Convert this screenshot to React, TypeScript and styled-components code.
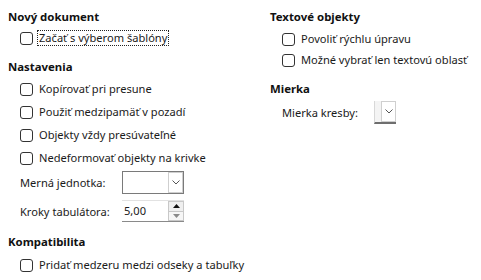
import React from 'react'
import styled, { createGlobalStyle } from 'styled-components'

const Global = createGlobalStyle`
  html, body { margin:0; padding:0; background:#fff; }
  body {
    font-family:"Noto Sans", "Open Sans", sans-serif;
    font-size:11.1px;
    color:#1a1a1a;
  }
`

const Page = styled.div`
  display:grid;
  grid-template-columns:262px 1fr;
  width:481px;
  height:280px;
  box-sizing:border-box;
  padding:9px 0 0 8px;
`

const Column = styled.div`
  display:flex;
  flex-direction:column;
`

const Section = styled.section<{ $top?: number }>`
  display:flex;
  flex-direction:column;
  margin-top:${p => p.$top ?? 0}px;
`

const Heading = styled.h3`
  margin:0;
  height:16px;
  font-size:11.4px;
  line-height:16px;
  font-weight:700;
  color:#111;
`

const Body = styled.div<{ $top?: number }>`
  display:flex;
  flex-direction:column;
  padding-left:12px;
  margin-top:${p => p.$top ?? 2}px;
`

const CheckRow = styled.label<{ $h?: number }>`
  display:flex;
  align-items:center;
  gap:5px;
  height:${p => p.$h ?? 22}px;
  white-space:nowrap;
`

const Box = styled.span`
  width:11px;
  height:11px;
  border:1px solid #333;
  border-radius:3px;
  background:#fff;
  flex:none;
`

const Caption = styled.span<{ $focus?: boolean }>`
  line-height:14px;
  padding:0 1px;
  margin-left:-1px;
  border:1px dotted ${p => (p.$focus ? '#222' : 'transparent')};
`

const FieldRow = styled.div<{ $h: number; $top?: number; $label: number }>`
  display:grid;
  grid-template-columns:${p => p.$label}px auto;
  align-items:center;
  height:${p => p.$h}px;
  margin-top:${p => p.$top ?? 0}px;
`

const Combo = styled.div<{ $w: number }>`
  display:flex;
  justify-content:flex-end;
  width:${p => p.$w}px;
  height:23px;
  box-sizing:border-box;
  background:#fff;
  border:1px solid #7a7a7a;
`

const NarrowCombo = styled.div`
  display:flex;
  justify-content:flex-end;
  width:22px;
  height:23px;
  box-sizing:border-box;
  border-left:1px solid #d8d8d8;
  border-bottom:2px solid #6e6e6e;
  background:#f4f4f4;
`

const DropButton = styled.div`
  display:flex;
  align-items:center;
  justify-content:center;
  width:15px;
  box-sizing:border-box;
  border:1px solid #cfcfcf;
  background:#fff;
`

const Spin = styled.div`
  display:flex;
  width:62px;
  height:22px;
  box-sizing:border-box;
  border-top:1px solid #e2e2e2;
  border-bottom:1px solid #8a8a8a;
  background:#fff;
`

const SpinValue = styled.span`
  flex:1;
  padding-left:2px;
  line-height:20px;
`

const SpinButtons = styled.div`
  display:flex;
  flex-direction:column;
  width:16px;
`

const SpinButton = styled.div<{ $down?: boolean }>`
  flex:1;
  display:flex;
  align-items:center;
  justify-content:center;
  border:1px solid #c8c8c8;
  border-top-width:${p => (p.$down ? 0 : 1)}px;
  background:${p => (p.$down ? '#f6f6f6' : '#efefef')};
`

const Chevron = () => (
  <svg width="8" height="5" viewBox="0 0 8 5">
    <polyline points="0.5,0.5 4,4 7.5,0.5" fill="none" stroke="#555" strokeWidth="1" />
  </svg>
)

const Arrow = ({ down }: { down?: boolean }) => (
  <svg width="7" height="4" viewBox="0 0 7 4">
    {down ? <polygon points="0,0 7,0 3.5,4" fill="#8a8a8a" /> : <polygon points="0,4 7,4 3.5,0" fill="#111" />}
  </svg>
)

const Check = ({ children, focus, h }: { children: React.ReactNode; focus?: boolean; h?: number }) => (
  <CheckRow $h={h}>
    <Box />
    <Caption $focus={focus}>{children}</Caption>
  </CheckRow>
)

export default function App() {
  return (
    <>
      <Global />
      <Page>
        <Column>
          <Section>
            <Heading>Nový dokument</Heading>
            <Body $top={2}>
              <Check focus>Začať s výberom šablóny</Check>
            </Body>
          </Section>

          <Section $top={10}>
            <Heading>Nastavenia</Heading>
            <Body $top={2.5}>
              <Check h={23}>Kopírovať pri presune</Check>
              <Check h={23}>Použiť medzipamäť v pozadí</Check>
              <Check h={23}>Objekty vždy presúvateľné</Check>
              <Check h={23}>Nedeformovať objekty na krivke</Check>
              <FieldRow $h={24} $top={0.5} $label={102}>
                <span>Merná jednotka:</span>
                <Combo $w={62}>
                  <DropButton>
                    <Chevron />
                  </DropButton>
                </Combo>
              </FieldRow>
              <FieldRow $h={23} $top={5.5} $label={102}>
                <span>Kroky tabulátora:</span>
                <Spin>
                  <SpinValue>5,00</SpinValue>
                  <SpinButtons>
                    <SpinButton>
                      <Arrow />
                    </SpinButton>
                    <SpinButton $down>
                      <Arrow down />
                    </SpinButton>
                  </SpinButtons>
                </Spin>
              </FieldRow>
            </Body>
          </Section>

          <Section $top={11.5}>
            <Heading>Kompatibilita</Heading>
            <Body $top={4}>
              <Check>Pridať medzeru medzi odseky a tabuľky</Check>
            </Body>
          </Section>
        </Column>

        <Column>
          <Section>
            <Heading>Textové objekty</Heading>
            <Body $top={3.5}>
              <Check h={21}>Povoliť rýchlu úpravu</Check>
              <Check h={21}>Možné vybrať len textovú oblasť</Check>
            </Body>
          </Section>

          <Section $top={10}>
            <Heading>Mierka</Heading>
            <Body $top={4.5}>
              <FieldRow $h={23} $label={92}>
                <span>Mierka kresby:</span>
                <NarrowCombo>
                  <DropButton>
                    <Chevron />
                  </DropButton>
                </NarrowCombo>
              </FieldRow>
            </Body>
          </Section>
        </Column>
      </Page>
    </>
  )
}
